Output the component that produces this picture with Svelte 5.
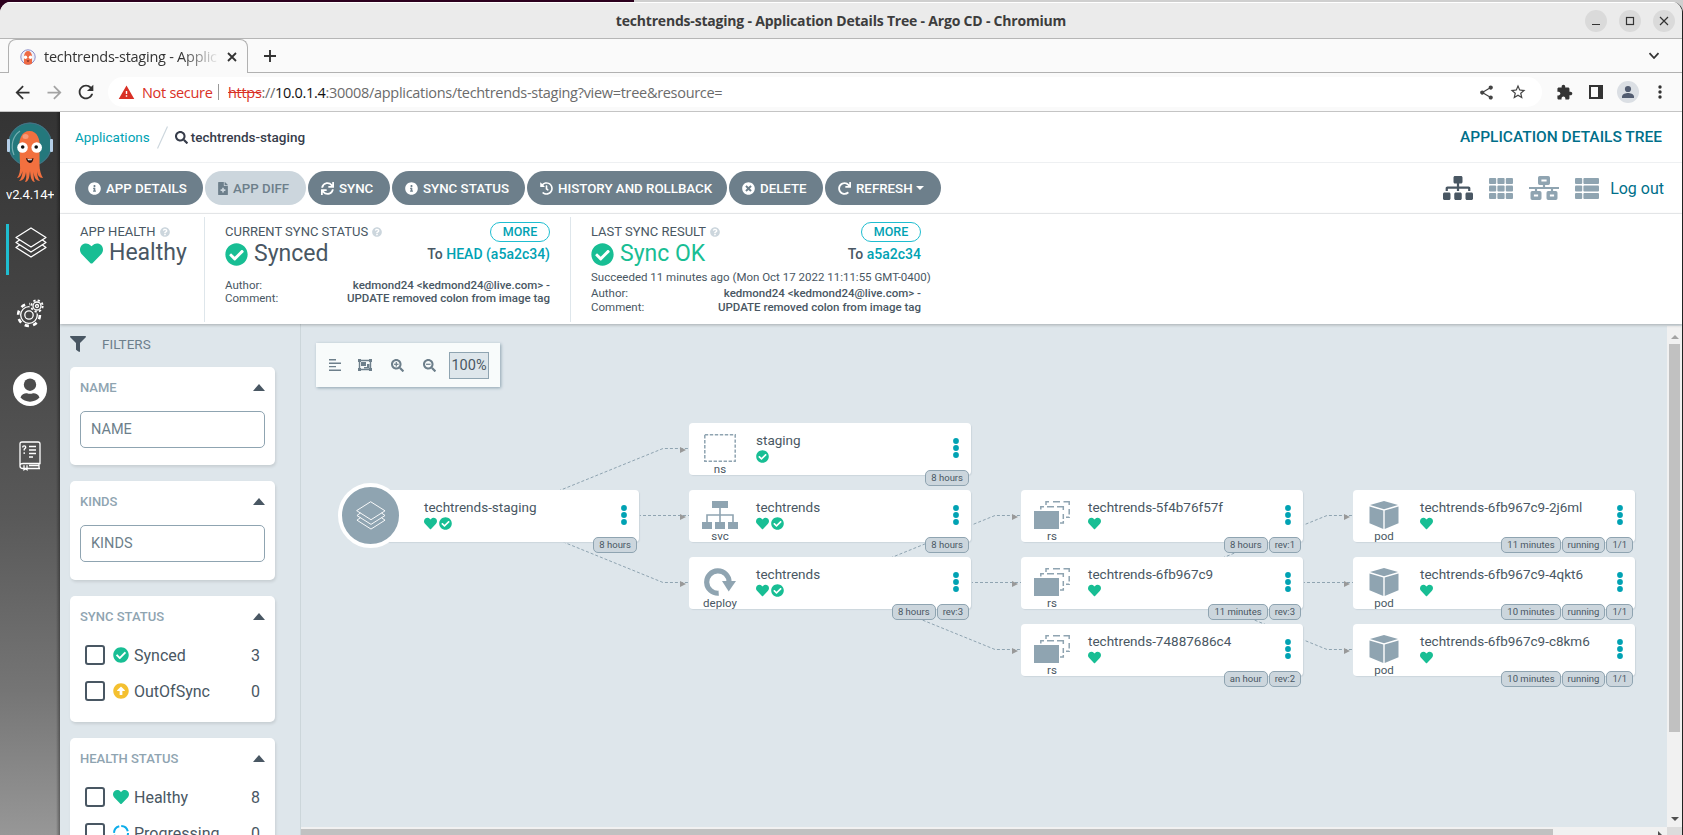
<script>
  const P = {
    check: 'M504 256c0 136.967-111.033 248-248 248S8 392.967 8 256 119.033 8 256 8s248 111.033 248 248zM227.314 387.314l184-184c6.248-6.248 6.248-16.379 0-22.627l-22.627-22.627c-6.248-6.249-16.379-6.249-22.628 0L216 308.118l-70.059-70.059c-6.248-6.248-16.379-6.248-22.628 0l-22.627 22.627c-6.248 6.248-6.248 16.379 0 22.627l104 104c6.249 6.249 16.379 6.249 22.628.001z',
    heart: 'M462.3 62.6C407.5 15.9 326 24.3 275.7 76.2L256 96.5l-19.7-20.3C186.1 24.3 104.5 15.9 49.7 62.6c-62.8 53.6-66.1 149.8-9.9 207.9l193.5 199.8c12.5 12.9 32.8 12.9 45.3 0l193.5-199.8c56.3-58.1 53-154.3-9.8-207.9z',
    question: 'M504 256c0 136.997-111.043 248-248 248S8 392.997 8 256C8 119.083 119.043 8 256 8s248 111.083 248 248zM262.655 90c-54.497 0-89.255 22.957-116.549 63.758-3.536 5.286-2.353 12.415 2.715 16.258l34.699 26.31c5.205 3.947 12.621 3.008 16.665-2.122 17.864-22.658 30.113-35.797 57.303-35.797 20.429 0 45.698 13.148 45.698 32.958 0 14.976-12.363 22.667-32.534 33.976C247.128 238.528 216 254.941 216 296v4c0 6.627 5.373 12 12 12h56c6.627 0 12-5.373 12-12v-1.333c0-28.462 83.186-29.647 83.186-106.667 0-58.002-60.165-102-116.531-102zM256 338c-25.365 0-46 20.635-46 46 0 25.364 20.635 46 46 46s46-20.636 46-46c0-25.365-20.635-46-46-46z',
    info: 'M256 8C119.043 8 8 119.083 8 256c0 136.997 111.043 248 248 248s248-111.003 248-248C504 119.083 392.957 8 256 8zm0 110c23.196 0 42 18.804 42 42s-18.804 42-42 42-42-18.804-42-42 18.804-42 42-42zm56 254c0 6.627-5.373 12-12 12h-88c-6.627 0-12-5.373-12-12v-24c0-6.627 5.373-12 12-12h12v-64h-12c-6.627 0-12-5.373-12-12v-24c0-6.627 5.373-12 12-12h64c6.627 0 12 5.373 12 12v100h12c6.627 0 12 5.373 12 12v24z',
    times: 'M256 8C119 8 8 119 8 256s111 248 248 248 248-111 248-248S393 8 256 8zm121.6 313.1c4.7 4.7 4.7 12.3 0 17L338 377.6c-4.7 4.7-12.3 4.7-17 0L256 312l-65.1 65.6c-4.7 4.7-12.3 4.7-17 0L134.4 338c-4.7-4.7-4.7-12.3 0-17l65.6-65-65.6-65.1c-4.7-4.7-4.7-12.3 0-17l39.6-39.6c4.7-4.7 12.3-4.7 17 0l65 65.7 65.1-65.6c4.7-4.7 12.3-4.7 17 0l39.6 39.6c4.7 4.7 4.7 12.3 0 17L312 256l65.6 65.1z',
    history: 'M504 255.531c.253 136.64-111.18 248.372-247.82 248.468-59.015.042-113.223-20.53-155.822-54.911-11.077-8.94-11.905-25.541-1.839-35.607l11.267-11.267c8.609-8.609 22.353-9.551 31.891-1.984C173.062 425.135 212.781 440 256 440c101.705 0 184-82.311 184-184 0-101.705-82.311-184-184-184-48.814 0-93.149 18.969-126.068 49.932l50.754 50.754c10.08 10.08 2.941 27.314-11.313 27.314H24c-8.837 0-16-7.163-16-16V38.627c0-14.254 17.234-21.393 27.314-11.314l49.372 49.372C129.209 34.136 189.552 8 256 8c136.81 0 247.747 110.78 248 247.531zm-180.912 78.784l9.823-12.63c8.138-10.463 6.253-25.542-4.21-33.679L288 256.349V152c0-13.255-10.745-24-24-24h-16c-13.255 0-24 10.745-24 24v135.651l65.409 50.874c10.463 8.137 25.541 6.253 33.679-4.21z',
    redo: 'M500.33 0h-47.41a12 12 0 0 0-12 12.57l4 82.76A247.42 247.42 0 0 0 256 8C119.34 8 7.9 119.53 8 256.19 8.1 393.07 119.1 504 256 504a247.1 247.1 0 0 0 166.18-63.91 12 12 0 0 0 .48-17.43l-34-34a12 12 0 0 0-16.38-.55A176 176 0 1 1 402.1 157.8l-101.53-4.87a12 12 0 0 0-12.57 12v47.41a12 12 0 0 0 12 12h200.33a12 12 0 0 0 12-12V12a12 12 0 0 0-12-12z',
    sync: 'M440.65 12.57l4 82.77A247.16 247.16 0 0 0 255.83 8C134.73 8 33.91 94.92 12.29 209.82A12 12 0 0 0 24.09 224h49.05a12 12 0 0 0 11.67-9.26 175.91 175.91 0 0 1 317-56.94l-101.46-4.86a12 12 0 0 0-12.57 12v47.41a12 12 0 0 0 12 12H500a12 12 0 0 0 12-12V12a12 12 0 0 0-12-12h-47.37a12 12 0 0 0-11.98 12.57zM255.83 432a175.61 175.61 0 0 1-146-77.8l101.8 4.87a12 12 0 0 0 12.57-12v-47.4a12 12 0 0 0-12-12H12a12 12 0 0 0-12 12V500a12 12 0 0 0 12 12h47.35a12 12 0 0 0 12-12.6l-4.15-82.57A247.17 247.17 0 0 0 255.83 504c121.11 0 221.93-86.92 243.55-201.82a12 12 0 0 0-11.8-14.18h-49.05a12 12 0 0 0-11.67 9.26A175.86 175.86 0 0 1 255.83 432z',
    file: 'M377 105L279.1 7c-4.5-4.5-10.6-7-17-7H256v128h128v-6.1c0-6.3-2.5-12.4-7-16.9zm-153 31V0H24C10.7 0 0 10.7 0 24v464c0 13.3 10.7 24 24 24h336c13.3 0 24-10.7 24-24V160H248c-13.2 0-24-10.8-24-24zm64 160v48c0 4.4-3.6 8-8 8h-56v56c0 4.4-3.6 8-8 8h-48c-4.4 0-8-3.6-8-8v-56h-56c-4.4 0-8-3.6-8-8v-48c0-4.4 3.6-8 8-8h56v-56c0-4.4 3.6-8 8-8h48c4.4 0 8 3.6 8 8v56h56c4.4 0 8 3.6 8 8z',
    search: 'M505 442.7L405.3 343c-4.5-4.5-10.6-7-17-7H372c27.6-35.3 44-79.7 44-128C416 93.1 322.9 0 208 0S0 93.1 0 208s93.1 208 208 208c48.3 0 92.7-16.4 128-44v16.3c0 6.4 2.5 12.5 7 17l99.7 99.7c9.4 9.4 24.6 9.4 33.9 0l28.3-28.3c9.4-9.4 9.4-24.6.1-34zM208 336c-70.7 0-128-57.2-128-128 0-70.7 57.2-128 128-128 70.7 0 128 57.2 128 128 0 70.7-57.2 128-128 128z',
    filter: 'M487.976 0H24.028C2.71 0-8.047 25.866 7.058 40.971L192 225.941V432c0 7.831 3.821 15.17 10.237 19.662l80 55.98C298.02 518.69 320 507.493 320 487.98V225.941l184.947-184.97C520.021 25.896 509.338 0 487.976 0z',
    up: 'M8 256C8 119 119 8 256 8s248 111 248 248-111 248-248 248S8 393 8 256zm292 116V256h70.9c10.7 0 16.1-13 8.5-20.5L264.5 121.2c-4.7-4.7-12.2-4.7-16.9 0l-115 114.3c-7.6 7.6-2.2 20.5 8.5 20.5H212v116c0 6.6 5.4 12 12 12h64c6.6 0 12-5.4 12-12z',
    sitemap: 'M128 352H32c-17.67 0-32 14.33-32 32v96c0 17.67 14.33 32 32 32h96c17.67 0 32-14.33 32-32v-96c0-17.67-14.33-32-32-32zm-24-80h192v48h48v-48h192v48h48v-57.59c0-21.17-17.23-38.41-38.41-38.41H344v-64h40c17.67 0 32-14.33 32-32V32c0-17.67-14.33-32-32-32H256c-17.67 0-32 14.33-32 32v96c0 17.67 14.33 32 32 32h40v64H94.41C73.23 224 56 241.23 56 262.41V320h48v-48zm264 80h-96c-17.67 0-32 14.33-32 32v96c0 17.67 14.33 32 32 32h96c17.67 0 32-14.33 32-32v-96c0-17.67-14.33-32-32-32zm240 0h-96c-17.67 0-32 14.33-32 32v96c0 17.67 14.33 32 32 32h96c17.67 0 32-14.33 32-32v-96c0-17.67-14.33-32-32-32z',
    back: 'M20 11H7.83l5.59-5.59L12 4l-8 8 8 8 1.41-1.41L7.83 13H20v-2z',
    forward: 'M12 4l-1.41 1.41L16.17 11H4v2h12.17l-5.58 5.59L12 20l8-8z',
    reload: 'M17.65 6.35C16.2 4.9 14.21 4 12 4c-4.42 0-7.99 3.58-7.99 8s3.57 8 7.99 8c3.73 0 6.84-2.55 7.73-6h-2.08c-.82 2.33-3.04 4-5.65 4-3.31 0-6-2.69-6-6s2.69-6 6-6c1.66 0 3.14.69 4.22 1.78L13 11h7V4l-2.35 2.35z',
    warn: 'M1 21h22L12 2 1 21zm12-3h-2v-2h2v2zm0-4h-2v-4h2v4z',
    share: 'M18 16.08c-.76 0-1.44.3-1.96.77L8.91 12.7c.05-.23.09-.46.09-.7s-.04-.47-.09-.7l7.05-4.11c.54.5 1.25.81 2.04.81 1.66 0 3-1.34 3-3s-1.34-3-3-3-3 1.34-3 3c0 .24.04.47.09.7L8.04 9.81C7.5 9.31 6.79 9 6 9c-1.66 0-3 1.34-3 3s1.34 3 3 3c.79 0 1.5-.31 2.04-.81l7.12 4.16c-.05.21-.08.43-.08.65 0 1.61 1.31 2.92 2.92 2.92s2.92-1.31 2.92-2.92-1.31-2.92-2.92-2.92z',
    star: 'M22 9.24l-7.19-.62L12 2 9.19 8.63 2 9.24l5.46 4.73L5.82 21 12 17.27 18.18 21l-1.63-7.03L22 9.24zM12 15.4l-3.76 2.27 1-4.28-3.32-2.88 4.38-.38L12 6.1l1.71 4.04 4.38.38-3.32 2.88 1 4.28L12 15.4z',
    ext: 'M20.5 11H19V7c0-1.1-.9-2-2-2h-4V3.5C13 2.12 11.88 1 10.5 1S8 2.12 8 3.5V5H4c-1.1 0-1.99.9-1.99 2v3.8H3.5c1.49 0 2.7 1.21 2.7 2.7s-1.21 2.7-2.7 2.7H2V20c0 1.1.9 2 2 2h3.8v-1.5c0-1.49 1.21-2.7 2.7-2.7 1.49 0 2.7 1.21 2.7 2.7V22H17c1.1 0 2-.9 2-2v-4h1.5c1.38 0 2.5-1.12 2.5-2.5S21.88 11 20.5 11z'
  };

  const actions = [
    { t: 'APP DETAILS', i: 'info', w: 128 },
    { t: 'APP DIFF', i: 'file', w: 101, off: true },
    { t: 'SYNC', i: 'sync', w: 82 },
    { t: 'SYNC STATUS', i: 'info', w: 133 },
    { t: 'HISTORY AND ROLLBACK', i: 'history', w: 200 },
    { t: 'DELETE', i: 'times', w: 94 },
    { t: 'REFRESH', i: 'redo', w: 116, caret: true }
  ];

  const X = [56, 388, 720, 1052];
  const Y = [99, 166, 233, 300];
  const nodes = [
    { c: 0, r: 1, kind: 'app', name: 'techtrends-staging', st: ['heart', 'check'], tags: ['8 hours'] },
    { c: 1, r: 0, kind: 'ns', name: 'staging', st: ['check'], tags: ['8 hours'] },
    { c: 1, r: 1, kind: 'svc', name: 'techtrends', st: ['heart', 'check'], tags: ['8 hours'] },
    { c: 1, r: 2, kind: 'deploy', name: 'techtrends', st: ['heart', 'check'], tags: ['8 hours', 'rev:3'] },
    { c: 2, r: 1, kind: 'rs', name: 'techtrends-5f4b76f57f', st: ['heart'], tags: ['8 hours', 'rev:1'] },
    { c: 2, r: 2, kind: 'rs', name: 'techtrends-6fb967c9', st: ['heart'], tags: ['11 minutes', 'rev:3'] },
    { c: 2, r: 3, kind: 'rs', name: 'techtrends-74887686c4', st: ['heart'], tags: ['an hour', 'rev:2'] },
    { c: 3, r: 1, kind: 'pod', name: 'techtrends-6fb967c9-2j6ml', st: ['heart'], tags: ['11 minutes', 'running', '1/1'] },
    { c: 3, r: 2, kind: 'pod', name: 'techtrends-6fb967c9-4qkt6', st: ['heart'], tags: ['10 minutes', 'running', '1/1'] },
    { c: 3, r: 3, kind: 'pod', name: 'techtrends-6fb967c9-c8km6', st: ['heart'], tags: ['10 minutes', 'running', '1/1'] }
  ];
  const links = [[0, 1, 0], [0, 1, 1], [0, 1, 2], [1, 2, 1], [1, 2, 2], [1, 2, 3], [2, 3, 1], [2, 3, 2], [2, 3, 3]];
  const edges = links.map(([c, d, r]) => {
    const from = c === 0 ? 1 : 2;
    const y0 = Y[from] + 25.5;
    const y1 = Y[r] + 25.5;
    return { pts: `${X[c] + 141},${y0} ${X[d] - 26},${y1} ${X[d]},${y1}`, ax: X[d] - 9, ay: y1 + 1.5 };
  });
</script>

{#snippet fa(name, w, h = w, vb = '0 0 512 512')}
  <svg width={w} height={h} viewBox={vb} fill="currentColor"><path d={P[name]} /></svg>
{/snippet}

{#snippet md(name, s)}
  <svg width={s} height={s} viewBox="0 0 24 24" fill="currentColor"><path d={P[name]} /></svg>
{/snippet}

{#snippet layers(w, h, sw)}
  <svg width={w} height={h} viewBox="0 0 32 31" fill="none" stroke="currentColor" stroke-width={sw} stroke-linejoin="round" stroke-linecap="round">
    <path d="M16 1 31 10.500 16 20 1 10.500Z" />
    <path d="M4.500 13 1 15.500 16 25 31 15.500 27.500 13" />
    <path d="M4.500 18 1 20.500 16 30 31 20.500 27.500 18" />
  </svg>
{/snippet}

{#snippet octo()}
  <svg class="octo" width="48" height="62" viewBox="7 121 48 62">
    <circle cx="31" cy="144.500" r="22" fill="#24787c" />
    <circle cx="31" cy="144.500" r="21.400" fill="none" stroke="#4b6f84" stroke-width="1" />
    <path d="M15 155C11 145 14 136 21 131" fill="none" stroke="#76adb0" stroke-width="1.200" />
    <rect x="8" y="139" width="3" height="13" rx="1" fill="#b5cfe8" />
    <rect x="51" y="139" width="3" height="13" rx="1" fill="#b5cfe8" />
    <path d="M20.500 150C19 139 23 131 30.500 131S42 139 40.500 150L40.500 165C40.500 170 42 175 44 178 40 178 38.500 175 38 171 38 175 39 179 41 181 37 181 35 177 34.500 172 34.500 177 35 181 36 182 32 182 31.500 176 31 171 30.500 176 30 182 26 182 27.500 179 27.500 176 27 172 26.500 177 24 181 20 181 22 179 23.500 175 23.500 171 22.500 175 21 178 18 178 20.500 175 21.500 170 21 165Z" fill="#f2703f" />
    <ellipse cx="26.500" cy="136.500" rx="3" ry="2.500" fill="#f79a78" />
    <circle cx="23.500" cy="147.500" r="5.300" fill="#fff" />
    <circle cx="37.700" cy="147.500" r="5.300" fill="#fff" />
    <circle cx="23.700" cy="147" r="1.800" fill="#111" />
    <circle cx="37.200" cy="147" r="1.800" fill="#111" />
    <path d="M27 158Q31 160 34.500 158 34 163 30.700 163 27.500 162 27 158Z" fill="#2c1512" />
    <path d="M28.500 158.800Q31 159.800 33 158.800L32.500 160.300H29Z" fill="#fff" />
  </svg>
{/snippet}

{#snippet kind(k)}
  {#if k === 'ns'}
    <svg width="32" height="28" viewBox="0 0 32 28"><rect x=".8" y=".8" width="30.400" height="26.400" fill="none" stroke="#8fa4b1" stroke-width="1.500" stroke-dasharray="3.400 1.600" /></svg>
  {:else if k === 'svc'}
    <svg width="36" height="28" viewBox="0 0 36 28" fill="#8fa4b1"><path d="M10 0h16v7H10zM0 21h10v7H0zM13 21h10v7H13zM26 21h10v7H26zM17.200 7h1.600v14h-1.600z" /><path d="M5 21V14H31V21" fill="none" stroke="#8fa4b1" stroke-width="1.600" /></svg>
  {:else if k === 'deploy'}
    <svg width="32" height="28" viewBox="0 0 32 28"><path d="M14.700 25.200A11.200 11.200 0 1 1 25.100 14" fill="none" stroke="#8fa4b1" stroke-width="5.200" /><path d="M18 13H32L24.700 23.500Z" fill="#8fa4b1" /></svg>
  {:else if k === 'rs'}
    <svg width="36" height="28" viewBox="0 0 36 28"><path d="M0 10h25v18H0z" fill="#8fa4b1" /><g fill="none" stroke="#8fa4b1" stroke-width="1.500"><path d="M6.800 8.500V5.800H10M13 5.800H20M23 5.800H29.300V9M29.300 13V18M29.300 20V22H26" /><path d="M12 4V.8H15M19 .8H26M29.500 .8H35.200V4M35.200 8V13.500M35.200 16V16.200H32" /></g></svg>
  {:else}
    <svg width="30" height="28" viewBox="0 0 30 28" fill="#8fa4b1"><path d="M15 0 29 4 15 8.200 1 4ZM.5 5.500 14.300 9.600V28L.5 22.200ZM29.500 5.500 15.700 9.600V28L29.500 22.200Z" /></svg>
  {/if}
{/snippet}

{#snippet tree()}
  <svg class="edges" width="1366" height="502">
    {#each edges as e}
      <polyline points={e.pts} fill="none" stroke="#8fa4b1" stroke-width="1" stroke-dasharray="3 2" />
      <path d="M{e.ax} {e.ay - 3}L{e.ax + 6} {e.ay}L{e.ax} {e.ay + 3}Z" fill="#999" />
    {/each}
  </svg>
  {#each nodes as n}
    <div class="node" style="left:{X[n.c]}px;top:{Y[n.r]}px">
      {#if n.kind === 'app'}
        <div class="disc">{@render layers(30, 29, 1)}</div>
      {:else}
        <div class="kind">{@render kind(n.kind)}<span>{n.kind}</span></div>
      {/if}
      <div class="body">
        <div class="name">{n.name}</div>
        <div class="st">{#each n.st as s}{@render fa(s, 13)}{/each}</div>
      </div>
      <svg class="dots" width="6" height="20" viewBox="0 0 6 20" fill="#00a2b3"><circle cx="3" cy="3" r="2.900" /><circle cx="3" cy="10" r="2.900" /><circle cx="3" cy="17" r="2.900" /></svg>
      <div class="tags">{#each n.tags as t}<span>{t}</span>{/each}</div>
    </div>
  {/each}
{/snippet}

{#snippet card(title)}
  <div class="ct"><span>{title}</span><svg width="12" height="7" viewBox="0 0 12 7"><path d="M6 0 12 7H0Z" fill="#495763" /></svg></div>
{/snippet}

<div class="screen">
  <div class="strip"></div>
  <div class="window">
    <header class="title">
      <span>techtrends-staging - Application Details Tree - Argo CD - Chromium</span>
      <div class="wbtns">
        <i><svg width="22" height="22"><path d="M7 14.500h8" stroke="#333" /></svg></i>
        <i><svg width="22" height="22"><rect x="7.500" y="7.500" width="7" height="7" fill="none" stroke="#333" stroke-width="1.200" /></svg></i>
        <i><svg width="22" height="22"><path d="M7 7l8 8M15 7l-8 8" stroke="#333" stroke-width="1.200" /></svg></i>
      </div>
    </header>

    <div class="tabs">
      <div class="tab">
        <svg width="16" height="16" viewBox="0 0 16 16"><circle cx="8" cy="8" r="7.200" fill="#eef0f8" stroke="#8c8cc8" /><path d="M4 7.500C4 0 12 0 12 7.500V14.500Q8 17 4 14.500Z" fill="#ee6a45" /><circle cx="5.500" cy="8.300" r="1.700" fill="#fff" /><circle cx="10.500" cy="8.300" r="1.700" fill="#fff" /><path d="M6.500 11.500H9.500L8 13Z" fill="#5a1a1a" /></svg>
        <span class="tt">techtrends-staging - Applic</span>
        <svg width="10" height="10" viewBox="0 0 10 10"><path d="M1 1l8 8M9 1L1 9" stroke="#333" stroke-width="1.800" /></svg>
      </div>
      <svg class="plus" width="12" height="12" viewBox="0 0 12 12"><path d="M6 0v12M0 6h12" stroke="#333" stroke-width="1.900" /></svg>
      <svg class="chev" width="12" height="8" viewBox="0 0 12 8"><path d="M1.500 1.200 6 6l4.500-4.800" fill="none" stroke="#333" stroke-width="1.800" /></svg>
    </div>

    <div class="nav">
      <div class="nbtn">{@render md('back', 21)}</div>
      <div class="nbtn dim">{@render md('forward', 21)}</div>
      <div class="nbtn">{@render md('reload', 22)}</div>
      <div class="omni">
        <span class="warn">{@render md('warn', 17)}</span>
        <span class="ns">Not secure</span>
        <b></b>
        <span class="url"><s>https</s>://<em>10.0.1.4</em>:30008/applications/techtrends-staging?view=tree&amp;resource=</span>
        <span class="oi">{@render md('share', 17)}</span>
        <span class="oi">{@render md('star', 18)}</span>
      </div>
      <div class="ntools">
        <span>{@render md('ext', 17)}</span>
        <span><svg width="14" height="14"><path d="M1 1h12v12H1z" fill="none" stroke="#333" stroke-width="2" /><path d="M9 0h5v14H9z" fill="#333" /></svg></span>
        <span><svg width="22" height="22"><circle cx="11" cy="11" r="11" fill="#dbdfe4" /><circle cx="11" cy="8" r="3.100" fill="#525c70" /><path d="M5 17v-1.500c0-2.500 4-3.500 6-3.500s6 1 6 3.500V17z" fill="#525c70" /></svg></span>
        <span><svg width="4" height="14" fill="#333"><circle cx="2" cy="2" r="1.700" /><circle cx="2" cy="7" r="1.700" /><circle cx="2" cy="12" r="1.700" /></svg></span>
      </div>
    </div>

    <div class="app">
      <aside class="side">
        {@render octo()}
        <div class="ver">v2.4.14+</div>
        <div class="si act">{@render layers(32, 31, 1.3)}</div>
        <div class="si gear">
          <svg width="30" height="31" viewBox="0 0 30 31" fill="none" stroke="#fff" stroke-width="1.300">
            <circle cx="14" cy="17" r="8.300" />
            <circle cx="14" cy="17" r="10.900" stroke-width="2.600" stroke-dasharray="4.280 4.280" />
            <circle cx="14" cy="17" r="4.200" />
            <circle cx="22" cy="8" r="6.500" fill="#464646" stroke="#464646" stroke-width="2" />
            <circle cx="22" cy="8" r="4" /><circle cx="22" cy="8" r="5.700" stroke-width="1.800" stroke-dasharray="2.240 2.240" />
            <circle cx="22" cy="8" r="1.500" />
          </svg>
        </div>
        <div class="si user">
          <svg width="34" height="34" viewBox="0 0 34 34"><circle cx="17" cy="17" r="17" fill="#fff" /><circle cx="17" cy="12.700" r="6.200" fill="#4c4c4c" /><path d="M7.500 25.500C8.500 22 12 21 14 21.300 16 22 18 22 20 21.300 22 21 25.500 22 26.500 25.500 22 31 12 31 7.500 25.500Z" fill="#4c4c4c" /></svg>
        </div>
        <div class="si book">
          <svg width="22" height="30" viewBox="0 0 22 30" fill="none" stroke="#fff" stroke-width="1.300"><path d="M1 25V3Q1 1 3 1H19Q21 1 21 3V22.500H4Q1 22.500 1 25T4 27.500H21M20 22.500V27.500M5 24.300v4.500l1.500-1 1.500 1v-4.500M10 24.500H20" /><path d="M3.700 6.500Q3.700 4.800 5.200 4.800T6.700 6.700L5.200 8.300V9.500M5.200 11.300V13M10 5.500h7M10 9h7M10 12.500h7M10 16h4" /></svg>
        </div>
      </aside>

      <main>
        <div class="crumbs">
          <a>Applications</a>
          <svg width="11" height="23"><path d="M.5 22.500 10.500.5" stroke="#ccd6dd" stroke-width="1.200" /></svg>
          <span class="cs">{@render fa('search', 13)}</span><strong>techtrends-staging</strong>
          <h1>APPLICATION DETAILS TREE</h1>
        </div>

        <div class="bar">
          {#each actions as a}
            <div class="btn" class:off={a.off} style="width:{a.w}px">
              {#if a.i === 'file'}{@render fa('file', 10, 13, '0 0 384 512')}{:else}{@render fa(a.i, 13)}{/if}
              <span>{a.t}</span>
              {#if a.caret}<svg class="car" width="8" height="4" viewBox="0 0 8 4"><path d="M0 0H8L4 4Z" fill="#fff" /></svg>{/if}
            </div>
          {/each}
          <div class="views">
            <span class="on">{@render fa('sitemap', 30, 24, '0 0 640 512')}</span>
            <svg width="24" height="21" viewBox="0 0 24 21" fill="#8fa4b1">{#each [0, 8.4, 16.8] as x}{#each [0, 7.500, 15] as y}<rect {x} {y} width="7.200" height="6" rx="1" />{/each}{/each}</svg>
            <svg width="30" height="24" viewBox="0 0 30 24" fill="none" stroke="#8fa4b1"><path d="M10.700 1.700h8.600v5.600h-8.600zM3.200 16.700h7.600v5.600H3.200zM19.200 16.700h7.600v5.600h-7.600z" stroke-width="3.400" stroke-linejoin="round" /><path d="M0 12h30M15 8v4M7 12v4M23 12v4" stroke-width="2.200" /></svg>
            <svg width="24" height="21" viewBox="0 0 24 21" fill="#8fa4b1">{#each [0, 7.500, 15] as y}<rect x="0" {y} width="7.200" height="6" rx="1" /><rect x="8.400" {y} width="15.600" height="6" rx="1" />{/each}</svg>
          </div>
          <a class="logout">Log out</a>
        </div>

        <div class="status">
          <section class="s1">
            <div class="lab">APP HEALTH <em>{@render fa('question', 10)}</em></div>
            <div class="big"><i>{@render fa('heart', 23)}</i>Healthy</div>
          </section>
          <section class="s2">
            <div class="row"><div class="lab">CURRENT SYNC STATUS <em>{@render fa('question', 10)}</em></div><div class="more">MORE</div></div>
            <div class="row r2"><div class="big"><i>{@render fa('check', 23)}</i>Synced</div><div class="to">To <a>HEAD (a5a2c34)</a></div></div>
            <div class="meta m1"><span>Author:</span><b>kedmond24 &lt;kedmond24@live.com&gt; -</b></div>
            <div class="meta"><span>Comment:</span><b>UPDATE removed colon from image tag</b></div>
          </section>
          <section class="s3">
            <div class="row"><div class="lab">LAST SYNC RESULT <em>{@render fa('question', 10)}</em></div><div class="more">MORE</div></div>
            <div class="row r2"><div class="big ok"><i>{@render fa('check', 23)}</i>Sync OK</div><div class="to">To <a>a5a2c34</a></div></div>
            <div class="succ">Succeeded 11 minutes ago (Mon Oct 17 2022 11:11:55 GMT-0400)</div>
            <div class="meta"><span>Author:</span><b>kedmond24 &lt;kedmond24@live.com&gt; -</b></div>
            <div class="meta"><span>Comment:</span><b>UPDATE removed colon from image tag</b></div>
          </section>
        </div>

        <div class="work">
          <div class="filters">
            <div class="fh">{@render fa('filter', 16)}<span>FILTERS</span></div>
            <div class="card inp">{@render card('NAME')}<div class="input">NAME</div></div>
            <div class="card inp k">{@render card('KINDS')}<div class="input">KINDS</div></div>
            <div class="card sy">{@render card('SYNC STATUS')}
              <div class="opt"><i></i><em class="g">{@render fa('check', 16)}</em><span>Synced</span><b>3</b></div>
              <div class="opt"><i></i><em class="y">{@render fa('up', 16)}</em><span>OutOfSync</span><b>0</b></div>
            </div>
            <div class="card">{@render card('HEALTH STATUS')}
              <div class="opt"><i></i><em class="g">{@render fa('heart', 16)}</em><span>Healthy</span><b>8</b></div>
              <div class="opt"><i></i><em><svg width="16" height="16"><circle cx="8" cy="8" r="7" fill="none" stroke="#0dadea" stroke-width="2" stroke-dasharray="9 2" /></svg></em><span>Progressing</span><b>0</b></div>
            </div>
          </div>
          <div class="canvas">
            {@render tree()}
            <div class="tools">
              <svg width="12" height="12" viewBox="0 0 12 12" stroke="#6d7f8b" stroke-width="1.400"><path d="M0 .8h7M0 4.200h12M0 7.600h7M0 11.200h12" /></svg>
              <svg width="14" height="12" viewBox="0 0 14 12" fill="#6d7f8b"><path d="M1.500 1.500h11v9h-11z" fill="none" stroke="#6d7f8b" stroke-width="1.400" /><path d="M0 0h3v3H0zM11 0h3v3h-3zM0 9h3v3H0zM11 9h3v3h-3zM3 3h5v4H3zM9 5h2.500v4.500H6V8h3z" /></svg>
              <svg width="13" height="13" viewBox="0 0 512 512" fill="#6d7f8b"><path d={P.search} /><path d="M184 120h48v176h-48z" /><path d="M120 184h176v48H120z" /></svg>
              <svg width="13" height="13" viewBox="0 0 512 512" fill="#6d7f8b"><path d={P.search} /><path d="M120 184h176v48H120z" /></svg>
              <span>100%</span>
            </div>
            <div class="hs"><i></i><svg width="4" height="8"><path d="M0 0 4 4 0 8Z" fill="#505050" /></svg></div>
          </div>
          <div class="vs">
            <svg width="8" height="4"><path d="M0 4 4 0 8 4Z" fill="#a3a3a3" /></svg>
            <i></i>
            <svg class="dn" width="8" height="4"><path d="M0 0H8L4 4Z" fill="#505050" /></svg>
          </div>
        </div>
      </main>
    </div>
  </div>
</div>

<style>
  :global(body) { margin: 0; overflow: hidden; }
  * { box-sizing: border-box; }
  svg { display: block; flex: none; }
  i, em { font-style: normal; }
  .screen { width: 1683px; height: 835px; overflow: hidden; background: linear-gradient(90deg, #2c001e 0 634px, #cfcfcf 634px); font-family: Roboto, sans-serif; color: #495763; display: flex; flex-direction: column; }
  .strip { height: 2px; flex: none; }
  .window { flex: 1; min-height: 0; display: flex; flex-direction: column; background: #fafafa; border-radius: 11px 11px 0 0; overflow: hidden; border-right: 1px solid #222; }
  .title { height: 37px; flex: none; background: #ebebeb; border-bottom: 1px solid #b6b6b6; border-top: 1px solid #fff; display: grid; grid-template-columns: 1fr auto 1fr; align-items: center; font: 700 14px "Open Sans", sans-serif; color: #3d3d3d; }
  .title span { grid-column: 2; letter-spacing: -.2px; white-space: nowrap; }
  .wbtns { display: flex; gap: 12px; justify-self: end; margin-right: 7px; }
  .wbtns i { width: 22px; height: 22px; border-radius: 50%; background: #dadada; }
  .tabs { height: 34px; flex: none; border-bottom: 1px solid #b1b1b1; display: flex; align-items: center; }
  .tab { position: relative; margin-left: 8px; width: 240px; height: 34px; border: 1px solid #b1b1b1; border-bottom: 0; border-radius: 8px 8px 0 0; background: #fafafa; display: flex; align-items: center; padding: 0 10px 0 11px; margin-bottom: -1px; }
  .tt { width: 176px; margin: 0 7px 0 8px; overflow: hidden; white-space: nowrap; font: 14.500px "Open Sans", sans-serif; letter-spacing: -.25px; color: #333; -webkit-mask: linear-gradient(90deg, #000 78%, transparent 100%); mask: linear-gradient(90deg, #000 78%, transparent 100%); }
  .plus { margin-left: 16px; }
  .chev { margin-left: auto; margin-right: 22px; }
  .nav { height: 39px; flex: none; border-bottom: 1px solid #c4c4c4; display: flex; align-items: center; color: #333; }
  .nbtn { width: 32px; display: flex; justify-content: center; }
  .nbtn:first-child { margin-left: 6px; }
  .dim { color: #a3a3a3; }
  .omni { margin-left: 6px; width: 1434px; height: 30px; border-radius: 15px; background: #fff; display: flex; align-items: center; font: 14.500px "Open Sans", sans-serif; padding: 0 8px 0 10px; }
  .warn { color: #d93025; width: 24px; }
  .ns { color: #d93025; width: 76px; margin-left: 0; letter-spacing: -.3px; white-space: nowrap; }
  .omni b { width: 1px; height: 16px; background: #999; }
  .url { margin-left: 9px; color: #6b6b6b; white-space: nowrap; letter-spacing: -.3px; flex: 1; }
  .url s { color: #d93025; }
  .url em { color: #111; }
  .oi { width: 32px; display: flex; justify-content: center; color: #444; }
  .ntools { display: flex; margin-left: 6px; }
  .ntools span { width: 32px; display: flex; justify-content: center; align-items: center; }
  .app { flex: 1; min-height: 0; display: flex; }
  .side { width: 60px; flex: none; background: linear-gradient(90deg, transparent 56px, rgba(0,0,0,.35) 60px), linear-gradient(#343434, #444 26%, #595959 56%, #757575 80%, #979797); display: flex; flex-direction: column; align-items: center; color: #fff; padding-top: 9px; }
  .ver { width: 48px; height: 18px; line-height: 18px; margin-top: 3px; overflow: hidden; white-space: nowrap; font-size: 13px; letter-spacing: -.15px; }
  .si { width: 60px; display: flex; justify-content: center; align-items: flex-start; }
  .act { width: 48px; height: 51px; margin-top: 20px; margin-right: 0; align-self: flex-start; margin-left: 6px; border-left: 3px solid #1fbdd0; padding: 3px 2px 0 0; }
  .gear { margin-top: 23px; height: 31px; }
  .user { margin-top: 43px; height: 34px; }
  .book { margin-top: 35px; }
  main { flex: 1; min-width: 0; display: flex; flex-direction: column; background: #fff; }
  .crumbs { height: 51px; flex: none; border-bottom: 1px solid #eef0f2; display: flex; align-items: center; padding: 0 20px 0 15px; font-size: 13.500px; }
  .crumbs a { color: #00a2b3; }
  .crumbs > svg { margin-left: 7px; }
  .cs { margin: 0 3px 0 7px; color: #363c4a; }
  .crumbs strong { font-weight: 500; color: #363c4a; }
  h1 { margin: 0 0 0 auto; font-size: 15.500px; font-weight: 500; color: #006f8a; }
  .bar { height: 51px; flex: none; border-bottom: 1px solid #eef0f2; display: flex; align-items: center; gap: 2px; padding: 0 18px 0 15px; }
  .btn { height: 34px; border-radius: 17px; background: #6d7f8b; color: #fff; font-size: 13.300px; font-weight: 500; display: flex; align-items: center; padding-left: 13px; gap: 5px; white-space: nowrap; }
  .off { background: #ccd6dd; color: #6d7f8b; }
  .car { margin-left: -2px; }
  .views { margin-left: auto; display: flex; align-items: center; gap: 16px; }
  .on { color: #495763; }
  .logout { margin-left: 9px; color: #006f8a; font-size: 16px; }
  .status { height: 110px; flex: none; display: flex; position: relative; z-index: 2; background: #fff; padding: 3px 0 2px; box-shadow: 0 1px 3px rgba(0,0,0,.25); }
  section { padding-top: 5px; }
  .s1 { width: 145px; padding-left: 20px; border-right: 1px solid #dee6eb; }
  .s2 { width: 366px; padding-left: 20px; padding-right: 20px; border-right: 1px solid #dee6eb; }
  .s3 { width: 350px; padding-left: 20px; }
  .lab { font-size: 13px; height: 20px; line-height: 20px; display: flex; align-items: center; gap: 4px; white-space: nowrap; }
  .lab em { color: #ccd6dd; }
  .row { display: flex; justify-content: space-between; }
  .more { width: 60px; height: 20px; border: 1px solid #1fbdd0; border-radius: 10px; color: #00a2b3; font-size: 12.500px; font-weight: 500; line-height: 18px; text-align: center; }
  .big { font-size: 23px; height: 22px; line-height: 22px; display: flex; align-items: center; gap: 6px; white-space: nowrap; }
  .big i { color: #18be94; }
  .ok { color: #18be94; }
  .r2 { margin-top: 1px; }
  .to { font-size: 14px; font-weight: 500; line-height: 22px; }
  .to a { color: #00a2b3; }
  .meta { display: flex; justify-content: space-between; font-size: 11.500px; height: 13px; line-height: 13px; white-space: nowrap; }
  .meta b { font-weight: 500; }
  .m1 { margin-top: 14px; }
  .succ { font-size: 11.500px; height: 18px; line-height: 18px; margin-top: 3px; white-space: nowrap; }
  .s3 .meta { height: 14px; line-height: 14px; }
  .work { flex: 1; min-height: 0; display: flex; background: #dee6eb; }
  .filters { width: 241px; flex: none; padding-left: 10px; border-right: 1px solid #ccd6da; overflow: hidden; }
  .fh { height: 43px; display: flex; align-items: center; padding-bottom: 4px; font-size: 13.500px; color: #6d7f8b; }
  .fh :global(path) { fill: #495763; }
  .fh span { margin-left: 16px; }
  .card { width: 205px; background: #fff; border-radius: 5px; box-shadow: 1px 2px 3px rgba(0,0,0,.1); padding: 10px; margin-bottom: 16px; }
  .inp { height: 98px; }
  .k { height: 99px; }
  .sy { height: 126px; }
  .ct { height: 20px; display: flex; align-items: center; justify-content: space-between; font-size: 13px; font-weight: 500; color: #8fa4b1; }
  .input { margin-top: 14px; height: 37px; border: 1px solid #8fa4b1; border-radius: 5px; line-height: 35px; padding-left: 10px; font-size: 14.500px; color: #6d7f8b; }
  .opt { height: 36px; display: flex; align-items: center; padding: 0 5px; font-size: 16px; }
  .ct + .opt { margin-top: 11px; }
  .opt i { width: 20px; height: 20px; border: 2px solid #495763; border-radius: 3px; margin-right: 8px; }
  .opt em { margin-right: 5px; }
  .opt b { font-weight: 400; margin-left: auto; }
  .g { color: #18be94; }
  .y { color: #f4c030; }
  .canvas { position: relative; flex: 1; min-width: 0; }
  .edges { position: absolute; left: 0; top: 0; }
  .node { position: absolute; width: 282px; height: 52px; background: #fff; border-radius: 4px; box-shadow: 1px 1px 1px #ccd6dd; }
  .disc { position: absolute; left: -19px; top: -7px; width: 65px; height: 65px; border-radius: 50%; background: #8fa4b1; border: 4px solid #fff; color: #fff; display: flex; align-items: center; justify-content: center; }
  .kind { position: absolute; left: 0; top: 11px; width: 62px; display: flex; flex-direction: column; align-items: center; font-size: 11.500px; line-height: 14px; }
  .body { position: absolute; left: 67px; top: 9px; }
  .name { font-size: 13.500px; line-height: 16px; white-space: nowrap; }
  .st { display: flex; gap: 2px; color: #18be94; margin-top: 2px; }
  .dots { position: absolute; left: 264px; top: 15px; }
  .tags { position: absolute; right: 2px; top: 47px; display: flex; gap: 1px; }
  .tags span { height: 16px; line-height: 14px; border: 1px solid #8fa4b1; border-radius: 5px; background: #ccd6dd; padding: 0 5px; font-size: 9.500px; white-space: nowrap; }
  .tools { position: absolute; left: 15px; top: 19px; width: 184px; height: 44px; background: #f8fbfb; box-shadow: 1px 1px 3px #8fa4b1; display: flex; align-items: center; padding-left: 13px; }
  .tools svg:nth-child(2) { margin-left: 17px; }
  .tools svg:nth-child(3) { margin-left: 19px; }
  .tools svg:nth-child(4) { margin-left: 19px; }
  .tools span { margin-left: 13px; width: 40px; height: 27px; border: 1px solid #8fa4b1; background: #dee6eb; font-size: 14.500px; line-height: 25px; text-align: center; }
  .hs { position: absolute; left: 0; right: 0; bottom: 0; height: 8px; background: #f1f1f1; display: flex; align-items: flex-start; padding-top: 2px; overflow: hidden; }
  .hs i { width: 1252px; height: 8px; background: #c1c1c1; margin-right: 105px; }
  .hs svg { margin-top: 2px; }
  .vs { width: 15px; flex: none; background: #f1f1f1; border-bottom: 8px solid #dcdcdc; display: flex; flex-direction: column; align-items: center; padding-top: 9px; border-top: 2px solid #dee6eb; }
  .vs i { width: 11px; height: 388px; background: #c1c1c1; margin-top: 5px; }
  .dn { margin-top: auto; margin-bottom: 6px; }
</style>
